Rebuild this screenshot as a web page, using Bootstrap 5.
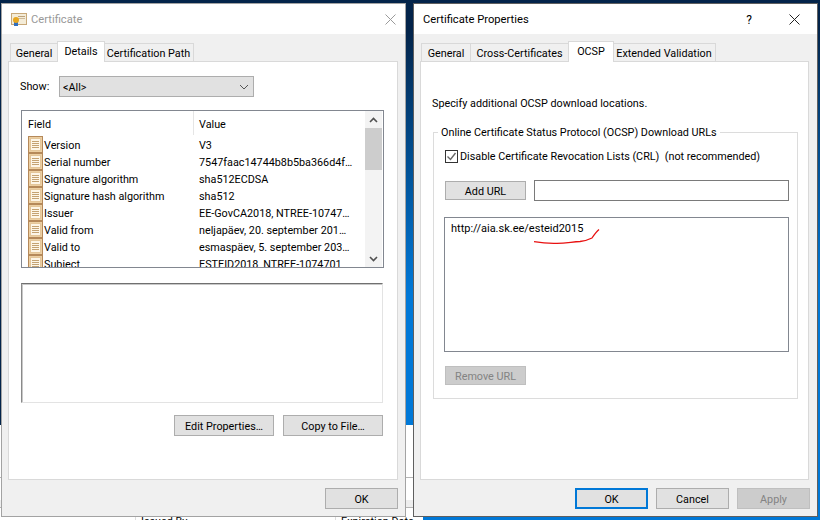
<!doctype html>
<html lang="en">
<head>
<meta charset="utf-8">
<title>Certificate</title>
<link href="https://cdn.jsdelivr.net/npm/bootstrap@5.3.0/dist/css/bootstrap.min.css" rel="stylesheet">
<style>
html,body{height:100%}
body{margin:0;overflow:hidden;font-family:Roboto,"Liberation Sans",sans-serif;font-size:10.8px;line-height:16px;color:#000;
 background:radial-gradient(620px 520px at 620px 520px,#0078d7 55%,#03244a 100%)}
.desk{position:relative;width:820px;height:520px;overflow:hidden}
.backwin{position:absolute;left:0;top:425px;width:423px;height:95px;background:#fff;overflow:hidden}
.backrule{border-top:1px solid #b5b5b5}
.backgap1{height:52px}
.backgap2{height:22px}
.backband{height:7px;background:#eee}
.backhead{height:16px;padding-left:135px;margin-top:6px}
.backcol{flex:none;border-left:1px solid #ddd;padding-left:5px;width:200px;line-height:16px;white-space:nowrap}
.dlg{position:absolute;top:3px;width:405px;height:514px;background:#f0f0f0;display:flex;flex-direction:column}
.dlg-l{left:1px;border:1px solid #a3a3a3}
.dlg-r{left:413px;border:1px solid #5f5f5f}
.tbar{height:30px;flex:none;background:#fff;display:flex;align-items:center;font-size:11.2px}
.dlg-l .tbar{padding:0 9px 0 9px;color:#999}
.dlg-r .tbar{padding:0 17px 0 9px}
.tbar-ttl{margin-left:4px;padding-top:2px}
.dlg-r .tbar-ttl{margin-left:0}
.qm{margin-right:37px;font-size:12px;padding-top:2px}
.dbody{flex:1;display:flex;flex-direction:column;min-height:0;padding:7px 7px 8px 6px}
.dlg-r .dbody{padding-right:8px}
.wtabs.nav{height:20px;flex:none;position:relative;z-index:1;padding-left:2px;border:0;flex-wrap:nowrap}
.dlg-r .wtabs.nav{padding-left:1px}
.wtabs .nav-link{height:18px;margin-top:2px;padding:2px 0 0;background:#f0f0f0;border:1px solid #d9d9d9;border-bottom:0;border-left-width:0;border-radius:0;color:#000;font-size:10.8px;line-height:16px;white-space:nowrap;text-align:center}
.wtabs .nav-item:first-child .nav-link{border-left-width:1px}
.wtabs .nav-link.active{height:21px;margin-top:0;margin-left:-1px;margin-right:-1px;border-left-width:1px;background:#fff;color:#000;padding-top:2px;position:relative}
.panel-w{height:419px;flex:none;background:#fff;border:1px solid #d9d9d9}
.dlg-l .panel-w{padding:14px 14px 0 12px}
.dlg-r .panel-w{padding:33px 10px 0 11px}
.show-lbl{width:39px;margin-left:-1px}
.show-sel.form-select{width:195px;height:21px;min-height:0;padding:2px 20px 0 3px;border:1px solid #adadad;border-radius:0;background-color:#e1e1e1;font-size:10.8px;line-height:17px;color:#000;box-shadow:none;
 background-image:url("data:image/svg+xml,%3Csvg xmlns='http://www.w3.org/2000/svg' width='10' height='6'%3E%3Cpath d='M1 1l4 4 4-4' fill='none' stroke='%23555'/%3E%3C/svg%3E");background-size:10px 6px;background-position:right 4px center}
.flist{height:158px;margin-top:13px;margin-right:-1px;border:1px solid #828790;display:flex;overflow:hidden;background:#fff}
.flist-main{flex:1;min-width:0;overflow:hidden}
.fhead{display:flex;height:25px;align-items:flex-start}
.fh1{width:172px;padding-left:6px;height:24px;line-height:28px;border-right:1px solid #e5e5e5}
.fh2{padding-left:5px;line-height:28px}
.frow{display:flex;height:17px;align-items:flex-start;white-space:nowrap;line-height:19px}
.fc1{width:172px;height:17px;padding-left:6px;display:flex;align-items:flex-start;flex:none}
.fc2{padding-left:5px}
.ficon{width:16px;height:17px;flex:none}
.sbar{width:17px;margin:0 1px 0 0;flex:none;background:#f3f3f3;display:flex;flex-direction:column;align-items:center}
.sbtn{height:17px;flex:none;display:flex;align-items:center;justify-content:center;width:100%}
.sthumb{width:100%;height:42px;flex:none;background:#cdcdcd}
.sfill{flex:1}
.sunken{height:120px;margin-top:15px;border:1px solid #e3e3e3;border-top-color:#707070;border-left-color:#8a8a8a;box-shadow:inset 1px 1px 0 #c8c8c8}
.wbtn.btn{height:21px;padding:0;border:1px solid #adadad;border-radius:0;background:#e1e1e1;color:#000;font-size:10.8px;line-height:21px;--bs-btn-hover-bg:#e1e1e1}
.w100{width:100px}
.w73{width:73px}
.wbtn.w81{flex:none;width:81px;height:19px;line-height:20px}
.btnrow{margin-top:12px;gap:9px}
.foot{margin-top:8px;gap:8px}
.dlg-r .foot{margin-right:-1px}
.wbtn.btn.def{border:2px solid #0078d7;line-height:20px}
.wbtn.btn.dis,.wbtn.btn:disabled{background:#ccc;border-color:#bfbfbf;color:#838383;opacity:1}
.gbox{height:275px;margin:13px 0 0 1px;width:365px;padding:0 10px;border:1px solid #dcdcdc;min-width:0}
.gbox legend{float:none;width:auto;height:16px;margin:0 0 0 -6px;padding:0 3px;font-size:10.8px;line-height:18px}
.crl{margin-top:8px;margin-left:1px;height:16px;white-space:nowrap}
.crl label{display:block;height:16px;line-height:18px}
.crl .form-check-input{width:13px;height:13px;margin:0 2px 0 0;border:1px solid #333;border-radius:0;flex:none;background-color:#fff;box-shadow:none;
 background-image:url("data:image/svg+xml,%3Csvg xmlns='http://www.w3.org/2000/svg' viewBox='0 0 13 13'%3E%3Cpath d='M2.5 6.5l3 3 5-6.5' fill='none' stroke='%23666' stroke-width='1.4'/%3E%3C/svg%3E");background-size:13px 13px}
.crl .form-check-input:checked{background-color:#fff;border-color:#333}
.addrow{margin-top:16px;margin-left:1px;gap:8px;width:345px}
.urlinp.form-control{flex:none;width:255px;height:21px;min-height:0;padding:0 3px;border:1px solid #7a7a7a;border-radius:0;box-shadow:none}
.urllist{position:relative;width:345px;height:135px;margin-top:16px;padding:3px 6px;border:1px solid #828790;background:#fff;font-size:11px}
.squig{position:absolute;left:89px;top:10px;width:70px;height:18px;overflow:visible}
.rmv{margin-top:14px;margin-left:1px}
.spec{height:16px;line-height:18px}
</style>
</head>
<body>
<svg width="0" height="0" class="d-block position-absolute">
 <symbol id="fi" viewBox="0 0 16 17">
  <rect x="0.5" y="0.5" width="14" height="16" fill="#eccfa2" stroke="#b5895a"/>
  <rect x="2" y="2" width="11" height="13" fill="#fdf6e8"/>
  <rect x="2.5" y="2.5" width="10" height="12" fill="none" stroke="#e4c69a"/>
  <path d="M4 5.5h7M4 7.5h7M4 9.5h7M4 11.5h7" stroke="#c4a272"/>
 </symbol>
</svg>
<div class="desk">
 <div class="backwin">
  <div class="backgap1"></div><div class="backrule"></div>
  <div class="backgap2"></div><div class="backband"></div><div class="backrule"></div>
  <div class="backhead d-flex"><div class="backcol">Issued By</div><div class="backcol">Expiration Date</div></div>
 </div>

 <div class="dlg dlg-l">
  <div class="tbar">
   <svg width="16" height="14" viewBox="0 0 16 14"><rect x="0.5" y="1.5" width="15" height="11" fill="#f4ecd8" stroke="#c8a878"/><rect x="7" y="4" width="7" height="1" fill="#bda27a"/><rect x="7" y="6" width="7" height="1" fill="#cdb999"/><rect x="3" y="9" width="4" height="5" fill="#2f6fc0"/><circle cx="5" cy="8" r="3" fill="#e7a61f"/></svg>
   <span class="tbar-ttl flex-grow-1">Certificate</span>
   <svg width="11" height="11" viewBox="0 0 11 11"><path d="M.5.5l10 10M10.5.5l-10 10" stroke="#9a9a9a" fill="none"/></svg>
  </div>
  <div class="dbody">
   <ul class="nav wtabs">
    <li class="nav-item"><span class="nav-link" style="width:48px">General</span></li>
    <li class="nav-item"><span class="nav-link active" style="width:48px">Details</span></li>
    <li class="nav-item"><span class="nav-link" style="width:90px">Certification Path</span></li>
   </ul>
   <div class="panel-w">
    <div class="d-flex align-items-center">
     <span class="show-lbl">Show:</span>
     <select class="form-select show-sel"><option>&lt;All&gt;</option></select>
    </div>
    <div class="flist">
     <div class="flist-main">
      <div class="fhead"><div class="fh1">Field</div><div class="fh2">Value</div></div>
      <div class="frow"><div class="fc1"><svg class="ficon"><use href="#fi"/></svg>Version</div><div class="fc2">V3</div></div>
      <div class="frow"><div class="fc1"><svg class="ficon"><use href="#fi"/></svg>Serial number</div><div class="fc2">7547faac14744b8b5ba366d4f…</div></div>
      <div class="frow"><div class="fc1"><svg class="ficon"><use href="#fi"/></svg>Signature algorithm</div><div class="fc2">sha512ECDSA</div></div>
      <div class="frow"><div class="fc1"><svg class="ficon"><use href="#fi"/></svg>Signature hash algorithm</div><div class="fc2">sha512</div></div>
      <div class="frow"><div class="fc1"><svg class="ficon"><use href="#fi"/></svg>Issuer</div><div class="fc2">EE-GovCA2018, NTREE-10747…</div></div>
      <div class="frow"><div class="fc1"><svg class="ficon"><use href="#fi"/></svg>Valid from</div><div class="fc2">neljapäev, 20. september 201…</div></div>
      <div class="frow"><div class="fc1"><svg class="ficon"><use href="#fi"/></svg>Valid to</div><div class="fc2">esmaspäev, 5. september 203…</div></div>
      <div class="frow"><div class="fc1"><svg class="ficon"><use href="#fi"/></svg>Subject</div><div class="fc2">ESTEID2018, NTREE-1074701</div></div>
     </div>
     <div class="sbar">
      <div class="sbtn"><svg width="9" height="6" viewBox="0 0 9 6"><path d="M1 5l3.5-3.5L8 5" fill="none" stroke="#505050" stroke-width="1.6"/></svg></div>
      <div class="sthumb"></div><div class="sfill"></div>
      <div class="sbtn"><svg width="9" height="6" viewBox="0 0 9 6"><path d="M1 1l3.5 3.5L8 1" fill="none" stroke="#505050" stroke-width="1.6"/></svg></div>
     </div>
    </div>
    <div class="sunken"></div>
    <div class="d-flex justify-content-end btnrow">
     <button class="btn wbtn w100" type="button">Edit Properties…</button>
     <button class="btn wbtn w100" type="button">Copy to File…</button>
    </div>
   </div>
   <div class="d-flex justify-content-end foot"><button class="btn wbtn w73" type="button">OK</button></div>
  </div>
 </div>

 <div class="dlg dlg-r">
  <div class="tbar">
   <span class="tbar-ttl flex-grow-1">Certificate Properties</span>
   <span class="qm">?</span>
   <svg width="11" height="11" viewBox="0 0 11 11"><path d="M.5.5l10 10M10.5.5l-10 10" stroke="#222" fill="none"/></svg>
  </div>
  <div class="dbody">
   <ul class="nav wtabs">
    <li class="nav-item"><span class="nav-link" style="width:50px">General</span></li>
    <li class="nav-item"><span class="nav-link" style="width:98px">Cross-Certificates</span></li>
    <li class="nav-item"><span class="nav-link active" style="width:46px">OCSP</span></li>
    <li class="nav-item"><span class="nav-link" style="width:103px">Extended Validation</span></li>
   </ul>
   <div class="panel-w">
    <div class="spec">Specify additional OCSP download locations.</div>
    <fieldset class="gbox">
     <legend>Online Certificate Status Protocol (OCSP) Download URLs</legend>
     <div class="crl d-flex align-items-center">
      <input class="form-check-input" type="checkbox" checked id="crl">
      <label for="crl">Disable Certificate Revocation Lists (CRL)&nbsp; (not recommended)</label>
     </div>
     <div class="addrow d-flex align-items-center">
      <button class="btn wbtn w81" type="button">Add URL</button>
      <input class="form-control urlinp" type="text" aria-label="URL">
     </div>
     <div class="urllist">http://aia.sk.ee/esteid2015
      <svg class="squig" viewBox="0 0 70 18"><path d="M0 13.7C8 15 16 15.5 23 15.3C32 15 38 14 46 13.5C51 13 54 12 58 10C60 7 62 4 65 1.5" fill="none" stroke="#e81010" stroke-width="1.3"/></svg>
     </div>
     <button class="btn wbtn w81 dis rmv" type="button">Remove URL</button>
    </fieldset>
   </div>
   <div class="d-flex justify-content-end foot">
    <button class="btn wbtn w73 def" type="button">OK</button>
    <button class="btn wbtn w73" type="button">Cancel</button>
    <button class="btn wbtn w73 dis" type="button">Apply</button>
   </div>
  </div>
 </div>
</div>
<script src="https://cdn.jsdelivr.net/npm/bootstrap@5.3.0/dist/js/bootstrap.bundle.min.js"></script>
</body>
</html>
